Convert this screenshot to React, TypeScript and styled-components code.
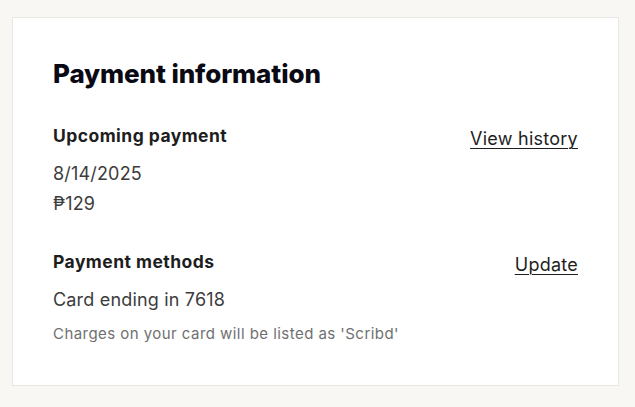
import React from "react";
import styled, { createGlobalStyle } from "styled-components";

const Global = createGlobalStyle`
  html, body { margin: 0; padding: 0; background: #f8f7f4; }
  body { font-family: Inter, "Noto Sans", sans-serif; -webkit-font-smoothing: antialiased; }
`;

const Page = styled.div`
  padding: 17px 16px 20px 12px;
`;

const Card = styled.section`
  background: #ffffff;
  border: 1px solid #e8e7e3;
  padding: 40px 40px 40px 40px;
  display: flex;
  flex-direction: column;
`;

const Title = styled.h1`
  margin: 0 0 35px;
  font-size: 26px;
  font-weight: 800;
  color: #0a0a14;
  line-height: 32px;
  letter-spacing: -0.1px;
`;

const Section = styled.div<{ $gap?: number }>`
  display: flex;
  justify-content: space-between;
  align-items: flex-start;
  margin-bottom: ${(p) => p.$gap ?? 0}px;
`;

const Info = styled.div`
  display: flex;
  flex-direction: column;
`;

const Heading = styled.h2`
  margin: 0 0 12px;
  font-size: 17.5px;
  font-weight: 700;
  color: #1e1e1e;
  line-height: 22px;
  letter-spacing: 0.45px;
`;

const Value = styled.div`
  font-size: 18px;
  color: #3c3c3c;
  line-height: 30px;
  letter-spacing: 0.18px;
`;

const Note = styled.div`
  margin-top: 8px;
  font-size: 15px;
  color: #707070;
  line-height: 22px;
  letter-spacing: 0.45px;
`;

const Link = styled.a`
  font-size: 18px;
  color: #1e1e1e;
  text-decoration: underline;
  text-underline-offset: 3px;
  text-decoration-thickness: 1px;
  line-height: 22px;
  letter-spacing: 0.25px;
  margin-top: 3px;
  cursor: pointer;
`;

export default function App() {
  return (
    <>
      <Global />
      <Page>
        <Card>
          <Title>Payment information</Title>
          <Section $gap={32}>
            <Info>
              <Heading>Upcoming payment</Heading>
              <Value>8/14/2025</Value>
              <Value>₱129</Value>
            </Info>
            <Link>View history</Link>
          </Section>
          <Section>
            <Info>
              <Heading>Payment methods</Heading>
              <Value>Card ending in 7618</Value>
              <Note>Charges on your card will be listed as 'Scribd'</Note>
            </Info>
            <Link>Update</Link>
          </Section>
        </Card>
      </Page>
    </>
  );
}
